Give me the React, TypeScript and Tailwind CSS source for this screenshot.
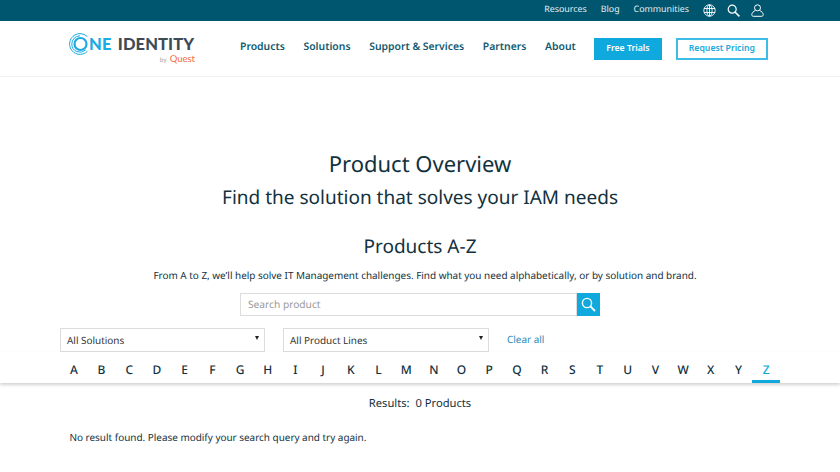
import React from 'react';

const letters = 'ABCDEFGHIJKLMNOPQRSTUVWXYZ'.split('');

const topLinks = ['Resources', 'Blog', 'Communities'];
const navLinks = ['Products', 'Solutions', 'Support & Services', 'Partners', 'About'];

const Logo: React.FC = () => (
  <div className="w-[127px] shrink-0 font-['Lato',sans-serif]">
    <div className="flex items-center h-[22px]">
      <svg width="22" height="22" viewBox="0 0 22 22" fill="none" stroke="#1cabe2" className="shrink-0">
        <circle cx="11.5" cy="11" r="6" strokeWidth="2.2" />
        <path d="M11 .6a10.4 10.4 0 1 0 7.4 17.7" strokeWidth="1" />
        <path d="M11 2.8a8.2 8.2 0 0 0-8.2 8.2 8.2 8.2 0 0 0 13.8 6" strokeWidth="1" />
        <path d="M11 .6a10.4 10.4 0 0 1 7.4 3" strokeWidth="1" />
      </svg>
      <span className="text-[#1cabe2] text-[16.5px] font-black leading-none -ml-[2px] tracking-[0.3px]">NE</span>
      <span className="text-[#3e4b57] text-[16.5px] font-black leading-none ml-[6px] tracking-[0.1px]">IDENTITY</span>
    </div>
    <div className="flex justify-end items-baseline h-[9px] leading-[9px] pr-[1px]">
      <span className="text-[#a9a9a9] text-[6.5px] mr-[3px]">by</span>
      <span className="text-[#f26b43] text-[9.5px]">Quest</span>
    </div>
  </div>
);

const FakeSelect: React.FC<{ label: string; className: string }> = ({ label, className }) => (
  <div className={`h-[24px] border border-[#dcdcdc] flex items-center justify-between pl-[6px] pr-[5px] text-[9.93px] text-[#333] ${className}`}>
    <span className="pt-[1px]">{label}</span>
    <span className="w-0 h-0 border-l-[2.5px] border-r-[2.5px] border-t-[4px] border-l-transparent border-r-transparent border-t-[#222] -mt-[4px]" />
  </div>
);

export default function App() {
  return (
    <div className="w-[840px] h-[472px] overflow-hidden bg-white font-['Noto_Sans',sans-serif] text-[#12313e] [text-rendering:geometricPrecision]">
      <div className="h-[21px] bg-[#00566e] flex items-center justify-end pr-[76px] text-white">
        <div className="flex items-center gap-[14px] -mt-[2px] text-[8.85px] text-[#e3edf0]">
          {topLinks.map((l) => (
            <span key={l}>{l}</span>
          ))}
        </div>
        <svg width="13" height="13" viewBox="0 0 13 13" fill="none" stroke="white" strokeWidth="0.9" className="ml-[14px] -mt-[1px]">
          <circle cx="6.5" cy="6.5" r="5.7" />
          <ellipse cx="6.5" cy="6.5" rx="2.6" ry="5.7" />
          <path d="M6.5.8v11.4M1 4.5h11M1 8.5h11" />
        </svg>
        <svg width="13" height="13" viewBox="0 0 13 13" fill="none" stroke="white" strokeWidth="1.2" className="ml-[11px] -mt-[1px]">
          <circle cx="5.2" cy="5.2" r="4" />
          <path d="M8.2 8.2l4.2 4.2" strokeWidth="1.5" />
        </svg>
        <svg width="13" height="13" viewBox="0 0 13 13" fill="none" stroke="white" strokeWidth="1" className="ml-[11px] -mt-[1px]">
          <circle cx="6.5" cy="3.8" r="3" />
          <path d="M4.4 6.4C2.4 7.4.8 9 .8 10.6c0 1 .5 1.7 1.5 1.7h8.4c1 0 1.5-.7 1.5-1.7 0-1.6-1.6-3.2-3.6-4.2" />
        </svg>
      </div>

      <header className="h-[56px] border-b border-[#f0f0f0] flex items-center pl-[69px]">
        <Logo />
        <nav className="flex gap-[18.7px] ml-[44px] -mt-[2px] text-[10.4px] font-semibold text-[#125a70]">
          {navLinks.map((l) => (
            <span key={l}>{l}</span>
          ))}
        </nav>
        <button className="ml-[18px] w-[68px] h-[22px] bg-[#0fa9dd] text-white text-[8.7px] font-semibold">Free Trials</button>
        <button className="ml-[14px] w-[92px] h-[22px] border-2 border-[#3dbde6] text-[#21a9da] text-[8.7px] font-semibold">Request Pricing</button>
      </header>

      <main className="flex flex-col items-center">
        <h1 className="mt-[69px] h-[36px] text-[22px] leading-[36px]">Product Overview</h1>
        <h2 className="mt-0 h-[30px] text-[19px] leading-[30px]">Find the solution that solves your IAM needs</h2>
        <h2 className="mt-[19px] h-[30px] text-[19px] leading-[30px]">Products A-Z</h2>
        <p className="mt-[5px] ml-[10px] h-[18px] text-[9.93px] leading-[18px]">From A to Z, we’ll help solve IT Management challenges. Find what you need alphabetically, or by solution and brand.</p>

        <div className="mt-[9px] flex h-[23px] w-[360px]">
          <div className="flex-1 border border-[#dcdcdc] flex items-center pl-[7px] pt-[1px] text-[10.2px] text-[#9a9a9a]">Search product</div>
          <div className="w-[23px] bg-[#0fa9dd] flex items-center justify-center">
            <svg width="15" height="15" viewBox="0 0 15 15" fill="none" stroke="white">
              <circle cx="6" cy="6" r="4.6" strokeWidth="1.4" />
              <path d="M9.4 9.4l4.6 4.6" strokeWidth="1.8" />
            </svg>
          </div>
        </div>

        <div className="mt-[12px] flex items-center w-[720px] h-[24px]">
          <FakeSelect label="All Solutions" className="w-[205px]" />
          <FakeSelect label="All Product Lines" className="w-[206px] ml-[18px]" />
          <span className="ml-[18px] -mt-[1px] text-[9.93px] text-[#2c8dbb]">Clear all</span>
        </div>

        <div className="w-full h-[31px] bg-white shadow-[0_2px_3px_rgba(0,0,0,0.18)] flex justify-center">
          <div className="w-[720px] grid grid-cols-[repeat(26,1fr)] h-full">
            {letters.map((l) => (
              <div
                key={l}
                className={`flex items-center justify-center text-[12px] font-medium ${
                  l === 'Z' ? 'text-[#0fa9dd] border-b-[3px] border-[#0fa9dd] pt-[8px]' : 'pt-[5px]'
                }`}
              >
                {l}
              </div>
            ))}
          </div>
        </div>

        <div className="mt-[12px] h-[18px] text-[11.2px] leading-[18px]">Results:&nbsp; 0 Products</div>
      </main>
      <p className="mt-[15px] pl-[69.5px] text-[9.93px] leading-[18px]">No result found. Please modify your search query and try again.</p>
    </div>
  );
}
